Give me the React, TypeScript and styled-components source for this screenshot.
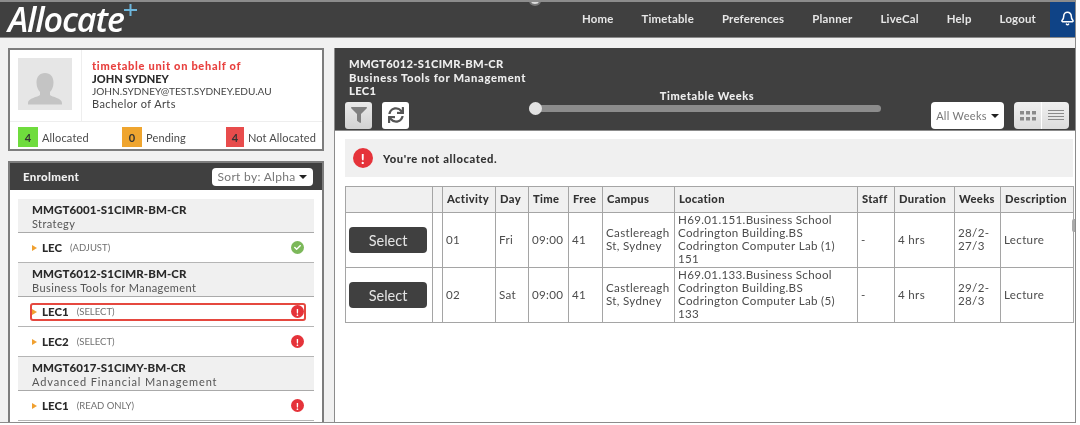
import React from "react";
import styled, { createGlobalStyle } from "styled-components";
import { Bell } from "lucide-react";
import { FaSync, FaFilter, FaCheck } from "react-icons/fa";

const Global = createGlobalStyle`
  html, body { margin: 0; padding: 0; background: #fff; overflow: hidden; }
  body { font-family: Lato, "Open Sans", "Liberation Sans", sans-serif; color: #444; }
  * { box-sizing: border-box; }
`;

const Frame = styled.div`
  position: relative; width: 1076px; height: 423px; overflow: hidden;
  background: #f1f1f1; border-top: 2px solid #8c8c8c; border-right: 1px solid #8c8c8c; border-bottom: 1px solid #8c8c8c;
  filter: blur(0.4px);
`;
const TopHandle = styled.div`
  position: absolute; left: 529px; top: -6px; width: 12px; height: 10px; border-radius: 50%;
  background: #ddd; border: 2px solid #777; z-index: 2;
`;
const SideHandle = styled.div`
  position: absolute; right: 0; top: 217px; width: 3px; height: 13px; border-radius: 2px 0 0 2px; background: #aaa; z-index: 2;
`;
const Header = styled.header`
  height: 36px; background: #404040; display: flex; align-items: stretch; border-bottom: 1px solid #8a8a8a; padding-left: 8px;
`;
const Logo = styled.div`
  position: relative; color: #fff; font-family: "Open Sans", sans-serif; font-style: italic; font-weight: 600;
  font-size: 34px; line-height: 35px; letter-spacing: -1.1px; width: 114px; white-space: nowrap;
`;
const Plus = styled.svg`
  position: absolute; left: 116px; top: 2px; width: 13px; height: 12px;
`;
const Nav = styled.nav`
  margin-left: auto; display: flex; align-items: center; gap: 28px; padding-bottom: 3px;
`;
const NavLink = styled.a`
  color: #e6e6e6; font-size: 11.4px; font-weight: 700; letter-spacing: 0.2px; white-space: nowrap;
`;
const BellBox = styled.div`
  width: 25px; margin-left: 14px; background: #0f4386; color: #fff; display: flex; align-items: center; justify-content: flex-end; padding-bottom: 2px;
`;
const Main = styled.main`
  display: flex; align-items: flex-start; gap: 9px; padding: 10px 0 0 8px;
`;
const Side = styled.aside`
  width: 317px; display: flex; flex-direction: column; gap: 10px;
`;
const ProfileCard = styled.section`
  height: 103px; border: 2px solid #7d7d7d; background: #fff;
`;
const ProfileTop = styled.div`
  height: 72px; display: flex; border-bottom: 1px solid #eee;
`;
const AvatarCell = styled.div`
  width: 72px; padding: 8px 0 0 8px; border-right: 1px solid #eee;
`;
const Avatar = styled.div`
  width: 54px; height: 52px; background: #e6e6e6; display: flex; align-items: flex-end; justify-content: center;
`;
const ProfileText = styled.div`
  padding: 10px 0 0 10px; font-size: 11px; line-height: 12.7px; color: #444; white-space: nowrap; letter-spacing: 0.4px;
`;
const Behalf = styled.div`
  color: #e8413f; font-weight: 900; letter-spacing: 0.7px;
`;
const Name = styled.div`
  color: #2a2a2a; font-weight: 900; letter-spacing: 0;
`;
const Email = styled.div`
  font-size: 10.1px; letter-spacing: 0;
`;
const Stats = styled.div`
  display: flex; height: 27px; padding: 3px 0 0 8px;
`;
const Stat = styled.div<{ $w: number }>`
  width: ${p => p.$w}px; display: flex; align-items: center; gap: 4px; font-size: 11px; color: #4a4a4a; letter-spacing: 0.15px; white-space: nowrap;
`;
const StatBox = styled.span<{ $c: string }>`
  width: 20px; height: 20px; background: ${p => p.$c}; color: #333; display: flex; align-items: center; justify-content: center; font-size: 11px; font-weight: 700;
`;
const EnrolCard = styled.section`
  height: 262px; border: 2px solid #7d7d7d; border-bottom: 0; background: #fff; overflow: hidden;
`;
const EnrolHead = styled.div`
  height: 27px; background: #404040; display: flex; align-items: center; justify-content: space-between; padding: 0 9px 0 13px;
`;
const EnrolTitle = styled.div`
  color: #f0f0f0; font-size: 11.5px; font-weight: 900; letter-spacing: 0.3px;
`;
const Dropdown = styled.div<{ $w: number }>`
  width: ${p => p.$w}px; background: #fff; border-radius: 4px; color: #777; font-size: 12px; letter-spacing: 0.3px;
  display: flex; align-items: center; justify-content: center; gap: 4px; white-space: nowrap;
`;
const SortBox = styled(Dropdown)`
  height: 18px;
`;
const Caret = styled.span`
  width: 0; height: 0; border-left: 4px solid transparent; border-right: 4px solid transparent; border-top: 4px solid #222;
`;
const EnrolList = styled.div`
  padding: 9px 8px 0;
`;
const UnitHead = styled.div`
  height: 34px; background: #f0f0f0; border-bottom: 1px solid #aaa; padding: 4px 0 0 14px; line-height: 14px;
`;
const UnitCode = styled.div`
  font-size: 11.5px; font-weight: 900; color: #2a2a2a; letter-spacing: 0.08px; white-space: nowrap;
`;
const UnitName = styled.div<{ $sp: number }>`
  font-size: 11px; color: #555; letter-spacing: ${p => p.$sp}px; white-space: nowrap;
`;
const Row = styled.div`
  height: 30px; padding: 0 0 0 12px; display: flex; align-items: center; border-bottom: 1px solid #b5b5b5;
`;
const RowInner = styled.div<{ $active?: boolean }>`
  flex: 1; height: 18px; display: flex; align-items: center; margin-right: 8px;
  border: 2px solid ${p => (p.$active ? "#e5483f" : "transparent")}; border-radius: 3px;
`;
const Arrow = styled.span`
  width: 0; height: 0; border-top: 3px solid transparent; border-bottom: 3px solid transparent; border-left: 5px solid #f0a030; margin-right: 5px;
`;
const RowName = styled.span`
  font-size: 11.5px; font-weight: 900; color: #2a2a2a; letter-spacing: 0;
`;
const RowNote = styled.span`
  font-size: 9.5px; color: #707070; margin-left: 8px;
`;
const ErrorDot = styled.span<{ $s?: number }>`
  width: ${p => p.$s ?? 13}px; height: ${p => p.$s ?? 13}px; border-radius: 50%; background: #e5333a; color: #fff;
  font-size: ${p => ((p.$s ?? 13) > 14 ? 14 : 10)}px; font-weight: 900; display: flex; align-items: center; justify-content: center; flex: none;
`;
const RowDot = styled(ErrorDot)`
  margin-left: auto;
`;
const OkDot = styled(RowDot)`
  background: #7cb85a; font-size: 7px;
`;
const Content = styled.section`
  width: 741px; height: 375px; margin-left: 1px; background: #fff; border-left: 1px solid #8c8c8c;
`;
const Toolbar = styled.div`
  height: 83px; background: #404040; border-bottom: 1px solid #8c8c8c; display: flex; padding: 0 6px 0 10px;
`;
const ToolLeft = styled.div`
  width: 184px; padding-top: 9px;
`;
const ToolTitle = styled.div`
  color: #eee; font-size: 11.2px; font-weight: 900; line-height: 13.5px; padding-left: 4px; white-space: nowrap;
`;
const TitleLine = styled.div<{ $sp: number }>`
  letter-spacing: ${p => p.$sp}px;
`;
const ToolBtns = styled.div`
  display: flex; gap: 10px; margin-top: 4px;
`;
const ToolBtn = styled.div<{ $white?: boolean }>`
  width: 27px; height: 27px; border-radius: 3px; background: ${p => (p.$white ? "#fff" : "linear-gradient(#eaeaea, #d2d2d2)")};
  color: ${p => (p.$white ? "#555" : "#808080")}; display: flex; align-items: center; justify-content: center;
`;
const SliderBlock = styled.div`
  width: 352px; padding-top: 41px; display: flex; flex-direction: column; align-items: center;
`;
const SliderLabel = styled.div`
  color: #eee; font-size: 11px; font-weight: 900; letter-spacing: 0.6px; line-height: 13px; padding-left: 4px;
`;
const Track = styled.div`
  position: relative; width: 100%; height: 7px; margin-top: 3px; border-radius: 4px; background: #8c8c8c;
`;
const Thumb = styled.span`
  position: absolute; left: 0; top: -3px; width: 13px; height: 13px; border-radius: 50%; background: #e2e2e2;
`;
const ToolRight = styled.div`
  margin-left: auto; display: flex; align-items: flex-end; gap: 10px; padding-bottom: 1px;
`;
const WeeksBox = styled(Dropdown)`
  height: 27px; font-size: 11px;
`;
const Toggle = styled.div`
  width: 55px; height: 27px; display: flex; border-radius: 4px; overflow: hidden; background: linear-gradient(#f0f0f0, #dcdcdc);
`;
const ToggleHalf = styled.div<{ $line?: boolean }>`
  flex: 1; display: flex; align-items: center; justify-content: center; color: #8a8a8a;
  ${p => (p.$line ? "border-left: 1px solid #fff;" : "")}
`;
const Body = styled.div`
  padding: 8px 2px 0 10px;
`;
const Alert = styled.div`
  height: 38px; background: #f0f0f0; display: flex; align-items: center; gap: 10px; padding-left: 8px;
  font-size: 11.2px; font-weight: 900; color: #333; letter-spacing: 0.6px;
`;
const Table = styled.table`
  width: 728px; margin-top: 9px; table-layout: fixed; border-collapse: collapse; font-size: 11.6px; line-height: 13px; color: #4c4c4c;
`;
const Th = styled.th`
  height: 26px; background: #f0f0f0; border: 1px solid #a5a5a5; padding: 0 4px 2px; text-align: left; font-size: 11.2px; font-weight: 900;
  color: #333; letter-spacing: 0.35px; white-space: nowrap;
`;
const Td = styled.td`
  height: 55px; border: 1px solid #a5a5a5; padding: 0 3px 2px; letter-spacing: 0.32px;
`;
const SelectBtn = styled.button`
  display: block; width: 78px; height: 26px; margin-top: 2px; border: 0; border-radius: 4px; background: #404040; color: #e4e4e4;
  font: 400 14.5px Lato, sans-serif;
`;

const widths = [87, 10, 53, 33, 40, 34, 72, 183, 37, 60, 46, 73];
const headers = ["", "", "Activity", "Day", "Time", "Free", "Campus", "Location", "Staff", "Duration", "Weeks", "Description"];
const classes = [
  { a: "01", d: "Fri", loc: ["H69.01.151.Business School", "Codrington Building.BS", "Codrington Computer Lab (1)", "151"], w: ["28/2-", "27/3"] },
  { a: "02", d: "Sat", loc: ["H69.01.133.Business School", "Codrington Building.BS", "Codrington Computer Lab (5)", "133"], w: ["29/2-", "28/3"] },
];
const units = [
  { code: "MMGT6001-S1CIMR-BM-CR", name: "Strategy", sp: 0.4, rows: [{ n: "LEC", note: "(ADJUST)", ok: true }] },
  { code: "MMGT6012-S1CIMR-BM-CR", name: "Business Tools for Management", sp: 0.42, rows: [{ n: "LEC1", note: "(SELECT)", active: true }, { n: "LEC2", note: "(SELECT)" }] },
  { code: "MMGT6017-S1CIMY-BM-CR", name: "Advanced Financial Management", sp: 0.9, rows: [{ n: "LEC1", note: "(READ ONLY)" }] },
];

export default function App() {
  return (
    <Frame>
      <Global />
      <TopHandle />
      <SideHandle />
      <Header>
        <Logo>
          Allocate
          <Plus viewBox="0 0 13 12"><path d="M6.5 0v12M0 6h13" stroke="#6db6dc" strokeWidth="2" /></Plus>
        </Logo>
        <Nav>
          {["Home", "Timetable", "Preferences", "Planner", "LiveCal", "Help", "Logout"].map(n => <NavLink key={n}>{n}</NavLink>)}
        </Nav>
        <BellBox><Bell size={15} strokeWidth={2.4} /></BellBox>
      </Header>
      <Main>
        <Side>
          <ProfileCard>
            <ProfileTop>
              <AvatarCell>
                <Avatar>
                  <svg width="36" height="40" viewBox="0 0 36 40">
                    <path d="M18 3c5.500 0 8.500 4 8.500 9.500 0 4-1.500 7.500-3.500 9.500v3c2 2 12 3 12 8v1.500H1V33c0-5 10-6 12-8v-3c-2-2-3.500-5.500-3.500-9.500C9.500 7 12.500 3 18 3z" fill="#c4c4c4" />
                  </svg>
                </Avatar>
              </AvatarCell>
              <ProfileText>
                <Behalf>timetable unit on behalf of</Behalf>
                <Name>JOHN SYDNEY</Name>
                <Email>JOHN.SYDNEY@TEST.SYDNEY.EDU.AU</Email>
                <div>Bachelor of Arts</div>
              </ProfileText>
            </ProfileTop>
            <Stats>
              <Stat $w={104}><StatBox $c="#6fdc3d">4</StatBox>Allocated</Stat>
              <Stat $w={104}><StatBox $c="#efa52f">0</StatBox>Pending</Stat>
              <Stat $w={90}><StatBox $c="#e84c4c">4</StatBox>Not Allocated</Stat>
            </Stats>
          </ProfileCard>
          <EnrolCard>
            <EnrolHead>
              <EnrolTitle>Enrolment</EnrolTitle>
              <SortBox $w={101}>Sort by: Alpha <Caret /></SortBox>
            </EnrolHead>
            <EnrolList>
              {units.map(u => (
                <div key={u.code}>
                  <UnitHead>
                    <UnitCode>{u.code}</UnitCode>
                    <UnitName $sp={u.sp}>{u.name}</UnitName>
                  </UnitHead>
                  {u.rows.map(r => (
                    <Row key={r.n}>
                      <RowInner $active={"active" in r && r.active}>
                        <Arrow />
                        <RowName>{r.n}</RowName>
                        <RowNote>{r.note}</RowNote>
                        {"ok" in r && r.ok ? <OkDot><FaCheck /></OkDot> : <RowDot>!</RowDot>}
                      </RowInner>
                    </Row>
                  ))}
                </div>
              ))}
            </EnrolList>
          </EnrolCard>
        </Side>
        <Content>
          <Toolbar>
            <ToolLeft>
              <ToolTitle>
                <TitleLine $sp={0.28}>MMGT6012-S1CIMR-BM-CR</TitleLine>
                <TitleLine $sp={0.66}>Business Tools for Management</TitleLine>
                <TitleLine $sp={0.38}>LEC1</TitleLine>
              </ToolTitle>
              <ToolBtns>
                <ToolBtn><FaFilter size={16} /></ToolBtn>
                <ToolBtn $white><FaSync size={16} /></ToolBtn>
              </ToolBtns>
            </ToolLeft>
            <SliderBlock>
              <SliderLabel>Timetable Weeks</SliderLabel>
              <Track><Thumb /></Track>
            </SliderBlock>
            <ToolRight>
              <WeeksBox $w={73}>All Weeks <Caret /></WeeksBox>
              <Toggle>
                <ToggleHalf>
                  <svg width="16" height="10" viewBox="0 0 16 10" fill="currentColor">
                    {[0, 6, 12].flatMap(x => [0, 6].map(y => <rect key={`${x}${y}`} x={x} y={y} width="4" height="3.500" />))}
                  </svg>
                </ToggleHalf>
                <ToggleHalf $line>
                  <svg width="16" height="11" viewBox="0 0 16 11" stroke="currentColor" strokeWidth="1"><path d="M0 .5h16M0 3.500h16M0 6.500h16M0 9.500h16" /></svg>
                </ToggleHalf>
              </Toggle>
            </ToolRight>
          </Toolbar>
          <Body>
            <Alert><ErrorDot $s={20}>!</ErrorDot>You're not allocated.</Alert>
            <Table>
              <colgroup>{widths.map((w, i) => <col key={i} style={{ width: w }} />)}</colgroup>
              <thead><tr>{headers.map((h, i) => <Th key={i}>{h}</Th>)}</tr></thead>
              <tbody>
                {classes.map(c => (
                  <tr key={c.a}>
                    <Td><SelectBtn>Select</SelectBtn></Td>
                    <Td />
                    <Td>{c.a}</Td>
                    <Td>{c.d}</Td>
                    <Td>09:00</Td>
                    <Td>41</Td>
                    <Td>Castlereagh<br />St, Sydney</Td>
                    <Td>{c.loc.map(l => <div key={l}>{l}</div>)}</Td>
                    <Td>-</Td>
                    <Td>4 hrs</Td>
                    <Td>{c.w[0]}<br />{c.w[1]}</Td>
                    <Td>Lecture</Td>
                  </tr>
                ))}
              </tbody>
            </Table>
          </Body>
        </Content>
      </Main>
    </Frame>
  );
}
